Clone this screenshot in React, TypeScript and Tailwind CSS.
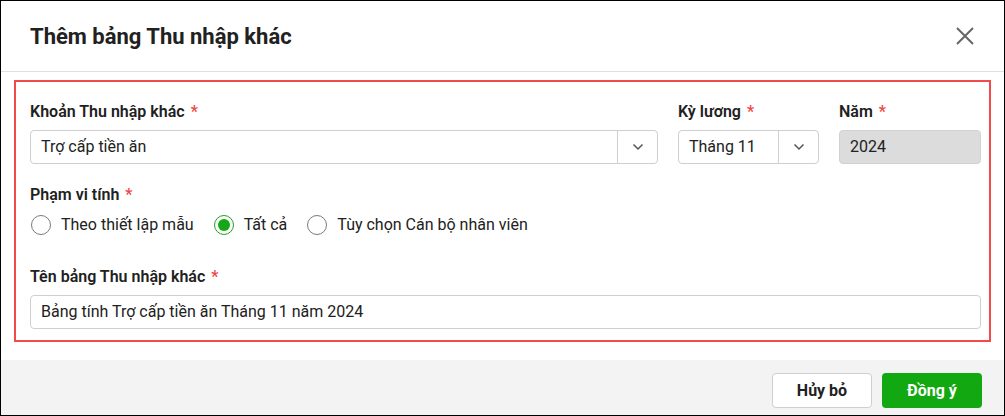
import { useState } from "react";

const Req = () => <span className="ml-[6px] text-[#f04848]">*</span>;

const Chevron = () => (
  <svg width="12" height="8" viewBox="0 0 12 8" fill="none">
    <path d="M1.5 1.5 6 6l4.5-4.5" stroke="#555" strokeWidth="1.5" />
  </svg>
);

const SelectBox = ({ value }: { value: string }) => (
  <div className="flex h-[34px] items-stretch rounded-[4px] border border-[#cfcfcf] bg-white">
    <div className="flex flex-1 items-center truncate pl-[10px]">{value}</div>
    <div className="flex w-[40px] items-center justify-center border-l border-[#cfcfcf]">
      <Chevron />
    </div>
  </div>
);

const Radio = ({ label, checked, onClick }: { label: string; checked: boolean; onClick: () => void }) => (
  <button type="button" onClick={onClick} className="flex items-center gap-[10px]">
    <span
      className={
        checked
          ? "flex h-[20px] w-[20px] items-center justify-center rounded-full border border-[#19a519]"
          : "h-[20px] w-[20px] rounded-full border border-[#7a7a7a]"
      }
    >
      {checked && <span className="h-[12px] w-[12px] rounded-full bg-[#14a814]" />}
    </span>
    <span>{label}</span>
  </button>
);

export default function App() {
  const [scope, setScope] = useState("all");

  return (
    <div
      className="flex h-[416px] w-[1005px] flex-col border border-black bg-white text-[16px] text-[#212121]"
      style={{ fontFamily: "Roboto, 'Noto Sans', sans-serif" }}
    >
      <div className="flex h-[71px] items-center justify-between border-b border-[#e0e0e0] pl-[29px] pr-[30px]">
        <h1 className="text-[22px] font-bold">Thêm bảng Thu nhập khác</h1>
        <button type="button" aria-label="Đóng">
          <svg width="18" height="18" viewBox="0 0 18 18" fill="none">
            <path d="M1 1l16 16M17 1 1 17" stroke="#666" strokeWidth="2" />
          </svg>
        </button>
      </div>

      <div className="mx-[13px] mt-[8px] border-2 border-[#f24a4a] pb-[11px] pl-[14px] pr-[8px] pt-[20px]">
        <div className="grid grid-cols-[1fr_141px_142px] gap-x-5">
          <div>
            <div className="mb-2 h-[20px] font-semibold leading-[20px]">
              Khoản Thu nhập khác
              <Req />
            </div>
            <SelectBox value="Trợ cấp tiền ăn" />
          </div>
          <div>
            <div className="mb-2 h-[20px] font-semibold leading-[20px]">
              Kỳ lương
              <Req />
            </div>
            <SelectBox value="Tháng 11" />
          </div>
          <div>
            <div className="mb-2 h-[20px] font-semibold leading-[20px]">
              Năm
              <Req />
            </div>
            <div className="flex h-[34px] items-center rounded-[4px] border border-[#d2d2d2] bg-[#dcdcdc] pl-[10px]">
              2024
            </div>
          </div>
        </div>

        <div className="mt-[21px] h-[20px] font-semibold leading-[20px]">
          Phạm vi tính
          <Req />
        </div>
        <div className="mt-[10px] flex h-[20px] items-center gap-[20px] pl-px">
          <Radio label="Theo thiết lập mẫu" checked={scope === "template"} onClick={() => setScope("template")} />
          <Radio label="Tất cả" checked={scope === "all"} onClick={() => setScope("all")} />
          <Radio label="Tùy chọn Cán bộ nhân viên" checked={scope === "custom"} onClick={() => setScope("custom")} />
        </div>

        <div className="mt-[32px] h-[20px] font-semibold leading-[20px]">
          Tên bảng Thu nhập khác
          <Req />
        </div>
        <div className="mt-2 flex h-[34px] items-center rounded-[4px] border border-[#cfcfcf] pl-[10px]">
          Bảng tính Trợ cấp tiền ăn Tháng 11 năm 2024
        </div>
      </div>

      <div className="mt-[18px] flex flex-1 items-start justify-end gap-[10px] bg-[#f3f3f3] pr-[22px] pt-[13px]">
        <button
          type="button"
          className="h-[35px] w-[100px] rounded-[4px] border border-[#cfcfcf] bg-white font-bold"
        >
          Hủy bỏ
        </button>
        <button type="button" className="h-[35px] w-[100px] rounded-[4px] bg-[#11a811] font-bold text-white">
          Đồng ý
        </button>
      </div>
    </div>
  );
}
